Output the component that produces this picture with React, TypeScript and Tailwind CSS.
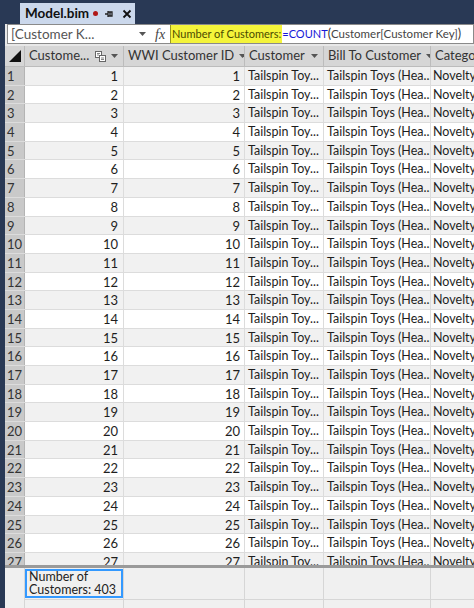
import React from 'react';

const font = { fontFamily: 'Lato, "Noto Sans", sans-serif' };

function DropArrow() {
  return (
    <svg width="7" height="4" viewBox="0 0 7 4" className="shrink-0">
      <path d="M0 0h7L3.5 4z" fill="#555" />
    </svg>
  );
}

function KeyIcon() {
  return (
    <svg width="11" height="11" viewBox="0 0 11 11" className="shrink-0">
      <rect x="0.5" y="0.5" width="6" height="6" fill="#fff" stroke="#666" />
      <rect x="4.5" y="4.5" width="6" height="6" fill="#fff" stroke="#666" />
      <path d="M2 2.5h3M2 4h2M6 7h3M6 8.5h3" stroke="#666" strokeWidth="0.8" />
    </svg>
  );
}

const cols = [
  { w: 'w-[99px]', label: 'Custome...', icon: true },
  { w: 'w-[121px]', label: 'WWI Customer ID' },
  { w: 'w-[79px]', label: 'Customer' },
  { w: 'w-[107px]', label: 'Bill To Customer' },
  { w: 'w-[60px]', label: 'Category' },
];

const rows = Array.from({ length: 27 }, (_, i) => i + 1);

export default function App() {
  return (
    <div className="w-[474px] h-[608px] overflow-hidden bg-[#293955] text-[12.5px] text-[#1e1e1e] flex flex-col" style={font}>
      {/* Document tab strip */}
      <div className="h-[24px] flex items-end pl-[20px] shrink-0">
        <div className="h-[21px] w-[115px] shrink-0 bg-[#cbd8ec] flex items-center pl-[5px]">
          <span className="font-bold text-[13.5px] text-[#111]">Model.bim</span>
          <span className="w-[5px] h-[5px] rounded-full bg-[#b01818] ml-[4px] shrink-0" />
          <svg width="10" height="10" viewBox="0 0 10 10" className="ml-[6px] shrink-0">
            <path d="M1 5h3M4 2v6M4 3h4v4H4M6 3v4" stroke="#222" strokeWidth="1.3" fill="none" />
          </svg>
          <svg width="10" height="10" viewBox="0 0 10 10" className="ml-[8px] shrink-0">
            <path d="M1.5 1.5l7 7M8.5 1.5l-7 7" stroke="#111" strokeWidth="1.8" />
          </svg>
        </div>
      </div>

      <div className="flex-1 flex pl-[5px] min-h-0">
        <div className="flex-1 flex flex-col bg-[#e8e8e8] min-w-0">
          {/* Formula bar */}
          <div className="h-[20px] bg-white border border-[#8a8a8a] ml-[2px] flex items-center shrink-0 overflow-hidden">
            <div className="w-[147px] shrink-0 flex items-center pl-[3px] pr-[9px] text-[#555] text-[13.5px]">
              <span className="flex-1 whitespace-nowrap">[Customer K...</span>
              <DropArrow />
            </div>
            <span className="italic text-[14px] text-[#444] w-[15px] shrink-0" style={{ fontFamily: '"Liberation Serif", serif' }}>fx</span>
            <div className="flex items-center text-[11px] whitespace-nowrap">
              <span className="bg-[#f4f43a] px-[1px] h-[18px] flex items-center border-l border-[#9a9a20] text-[#4a4a00]">Number of Customers:</span>
              <span className="text-[#1818d8]">=COUNT</span>
              <span className="text-[#333] text-[12.5px] leading-none">(</span>
              <span className="text-[#444] text-[11.5px]">Customer[Customer Key]</span>
              <span className="text-[#333] text-[12.5px] leading-none">)</span>
            </div>
          </div>

          <div className="h-[2px] shrink-0" />

          {/* Header row */}
          <div className="h-[21px] flex bg-[#d6d6d6] border-b border-[#bcbcbc] shrink-0 text-[13px]">
            <div className="w-[20px] shrink-0 flex items-end justify-center pb-[4px] border-r border-[#bcbcbc]">
              <svg width="12" height="12" viewBox="0 0 12 12">
                <path d="M12 0v12H0z" fill="#111" />
              </svg>
            </div>
            {cols.map((c) => (
              <div key={c.label} className={`${c.w} shrink-0 flex items-center pl-[4px] pr-[5px] gap-[5px] border-r border-[#bcbcbc] text-[#333] whitespace-nowrap overflow-hidden`}>
                <span className="flex-1">{c.label}</span>
                {c.icon && <KeyIcon />}
                <DropArrow />
              </div>
            ))}
          </div>

          {/* Body */}
          <div className="h-[498px] overflow-hidden shrink-0">
            {rows.map((n) => (
              <div key={n} className={`h-[18.7px] flex border-b border-[#dcdcdc] ${n % 2 === 0 ? 'bg-white' : 'bg-[#f1f1f1]'}`}>
                <div className="w-[20px] shrink-0 bg-[#c9c9c9] border-r border-[#b4b4b4] text-[#333] pl-[2px] leading-[18px] text-[13px]">{n}</div>
                <div className="w-[99px] shrink-0 text-right pr-[5px] border-r border-[#dcdcdc] leading-[18px] text-[13px]">{n}</div>
                <div className="w-[121px] shrink-0 text-right pr-[4px] border-r border-[#dcdcdc] leading-[18px] text-[13px]">{n}</div>
                <div className="w-[79px] shrink-0 pl-[3px] border-r border-[#dcdcdc] leading-[18px] whitespace-nowrap overflow-hidden">Tailspin Toy...</div>
                <div className="w-[107px] shrink-0 pl-[3px] border-r border-[#dcdcdc] leading-[18px] whitespace-nowrap overflow-hidden">Tailspin Toys (Hea...</div>
                <div className="w-[60px] shrink-0 pl-[2px] leading-[18px] whitespace-nowrap overflow-hidden">Novelty</div>
              </div>
            ))}
          </div>

          {/* Splitter */}
          <div className="h-[3px] bg-[#9a9a9a] shrink-0" />

          {/* Measure grid */}
          <div className="flex-1 flex bg-[#f0f0f0]">
            <div className="w-[20px] shrink-0 border-r border-[#d6d6d6]" />
            <div className="w-[99px] shrink-0 flex flex-col border-r border-[#d6d6d6]">
              <div className="h-[29px] mt-[1px] border-2 border-[#3399ff] leading-[12.5px] pl-[2px] text-[#222] overflow-hidden">
                Number of<br />Customers: 403
              </div>
              <div className="h-[1px] bg-[#d6d6d6] mt-[1px]" />
            </div>
            {['w-[121px]', 'w-[79px]', 'w-[107px]', 'w-[60px]'].map((w, i) => (
              <div key={i} className={`${w} shrink-0 flex flex-col border-r border-[#d6d6d6]`}>
                <div className="h-[31px]" />
                <div className="h-[1px] bg-[#d6d6d6]" />
              </div>
            ))}
          </div>
        </div>
      </div>
    </div>
  );
}
